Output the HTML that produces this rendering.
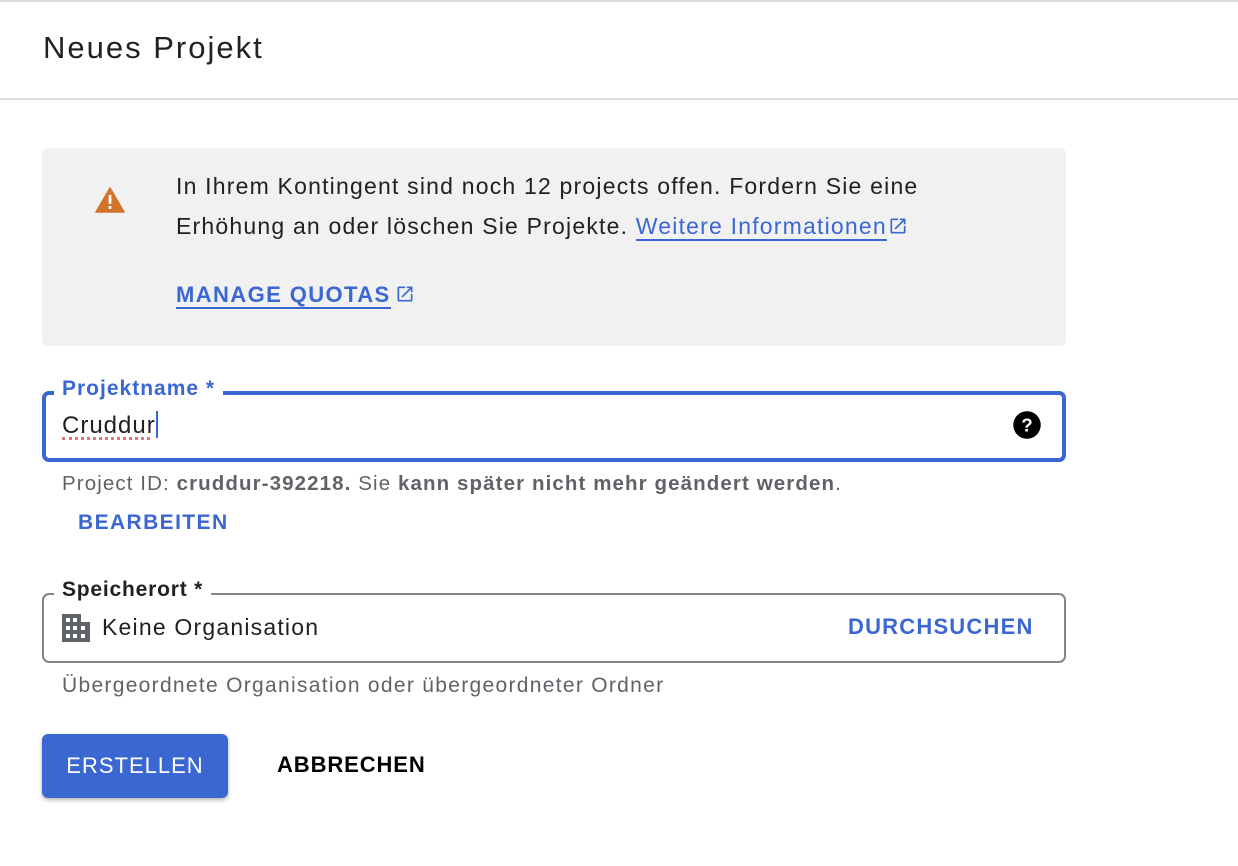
<!DOCTYPE html>
<html><head><meta charset="utf-8"><style>
*{box-sizing:border-box;margin:0;padding:0}
body{width:1238px;height:866px;background:#fff;font-family:"Liberation Sans",Arial,sans-serif;color:#202124;position:relative;overflow:hidden}
.a{position:absolute;white-space:nowrap}
a{color:#3b67d2;text-decoration:none}
</style></head><body>
<div class="a" style="left:0;top:0;width:1238px;height:2px;background:#dadce0"></div>
<div class="a" style="left:43px;top:30px;font-size:31px;letter-spacing:2px;color:#202124">Neues Projekt</div>
<div class="a" style="left:0;top:98px;width:1238px;height:2px;background:#dadce0"></div>

<div class="a" style="left:42px;top:148px;width:1024px;height:198px;background:#f1f1f1;border-radius:6px"></div>
<svg class="a" style="left:95px;top:187px" width="30" height="26" viewBox="0 0 30 26"><path d="M15 1 L29 25 L1 25 Z" fill="#d2722b" stroke="#d2722b" stroke-width="1.5" stroke-linejoin="round"/><rect x="13.6" y="8" width="2.8" height="9" fill="#fff"/><rect x="13.6" y="19" width="2.8" height="2.8" fill="#fff"/></svg>
<div class="a" style="left:176px;top:166px;font-size:23px;letter-spacing:1.2px;line-height:40px;color:#202124">In Ihrem Kontingent sind noch 12 projects offen. Fordern Sie eine<br>Erhöhung an oder löschen Sie Projekte. <a style="border-bottom:2px solid #3b67d2">Weitere Informationen</a> <svg width="20" height="20" viewBox="0 0 24 24" style="vertical-align:-2px;margin-left:-6px"><path d="M19 19H5V5h7V3H5a2 2 0 0 0-2 2v14a2 2 0 0 0 2 2h14a2 2 0 0 0 2-2v-7h-2v7zM14 3v2h3.59l-9.83 9.83 1.41 1.41L19 6.41V10h2V3h-7z" fill="#3b67d2"/></svg></div>
<div class="a" style="left:176px;top:282px;font-size:22px;letter-spacing:1.4px;font-weight:bold;color:#3b67d2"><a style="border-bottom:2px solid #3b67d2">MANAGE QUOTAS</a><svg width="20" height="20" viewBox="0 0 24 24" style="vertical-align:-2px;margin-left:4px"><path d="M19 19H5V5h7V3H5a2 2 0 0 0-2 2v14a2 2 0 0 0 2 2h14a2 2 0 0 0 2-2v-7h-2v7zM14 3v2h3.59l-9.83 9.83 1.41 1.41L19 6.41V10h2V3h-7z" fill="#3b67d2"/></svg></div>

<div class="a" style="left:42px;top:391px;width:1024px;height:71px;border:4px solid #3b67d2;border-radius:7px"></div>
<div class="a" style="left:54px;top:377px;padding:0 8px;background:#fff;font-size:21px;letter-spacing:1px;color:#3b67d2;font-weight:bold">Projektname *</div>
<div class="a" style="left:62px;top:411px;font-size:24px;letter-spacing:1px;color:#202124">Cruddur<span style="display:inline-block;width:2px;height:27px;background:#3b67d2;vertical-align:-5px"></span></div>
<div class="a" style="left:62px;top:437px;width:88px;border-bottom:3px dotted #e8766b"></div>
<svg class="a" style="left:1012px;top:410px" width="30" height="30" viewBox="0 0 24 24"><circle cx="12" cy="12" r="11" fill="#000"/><text x="12" y="17" font-size="15" font-weight="bold" fill="#fff" text-anchor="middle" font-family="Liberation Sans">?</text></svg>
<div class="a" style="left:62px;top:472px;font-size:20.5px;letter-spacing:1.1px;color:#5f6368">Project ID: <b>cruddur-392218.</b> Sie <b>kann später nicht mehr geändert werden</b>.</div>
<div class="a" style="left:78px;top:511px;font-size:21px;letter-spacing:1.4px;font-weight:bold;color:#3b67d2">BEARBEITEN</div>

<div class="a" style="left:42px;top:593px;width:1024px;height:70px;border:2px solid #80868b;border-radius:7px"></div>
<div class="a" style="left:54px;top:578px;padding:0 8px;background:#fff;font-size:21px;letter-spacing:0.8px;color:#202124;font-weight:bold">Speicherort *</div>
<svg class="a" style="left:62px;top:614px" width="28" height="28" viewBox="0 0 28 28"><path d="M0 0h19v8h9v20H0z" fill="#5f6368"/><g fill="#fff"><rect x="4" y="4" width="4" height="4"/><rect x="11" y="4" width="4" height="4"/><rect x="4" y="12" width="4" height="4"/><rect x="11" y="12" width="4" height="4"/><rect x="4" y="20" width="4" height="4"/><rect x="11" y="20" width="4" height="4"/><rect x="19" y="12" width="4" height="4"/><rect x="19" y="20" width="4" height="4"/></g></svg>
<div class="a" style="left:102px;top:614px;font-size:23px;letter-spacing:1.2px;color:#202124">Keine Organisation</div>
<div class="a" style="left:848px;top:614px;font-size:22px;letter-spacing:1.2px;font-weight:bold;color:#3b67d2">DURCHSUCHEN</div>
<div class="a" style="left:62px;top:674px;font-size:21px;letter-spacing:1.3px;color:#5f6368">Übergeordnete Organisation oder übergeordneter Ordner</div>

<div class="a" style="left:42px;top:734px;width:186px;height:64px;background:#3b67d2;border-radius:6px;box-shadow:0 2px 4px rgba(0,0,0,.3);color:#fff;font-size:22px;letter-spacing:1px;text-align:center;line-height:64px">ERSTELLEN</div>
<div class="a" style="left:277px;top:752px;font-size:22px;letter-spacing:0.9px;font-weight:bold;color:#000">ABBRECHEN</div>
</body></html>
